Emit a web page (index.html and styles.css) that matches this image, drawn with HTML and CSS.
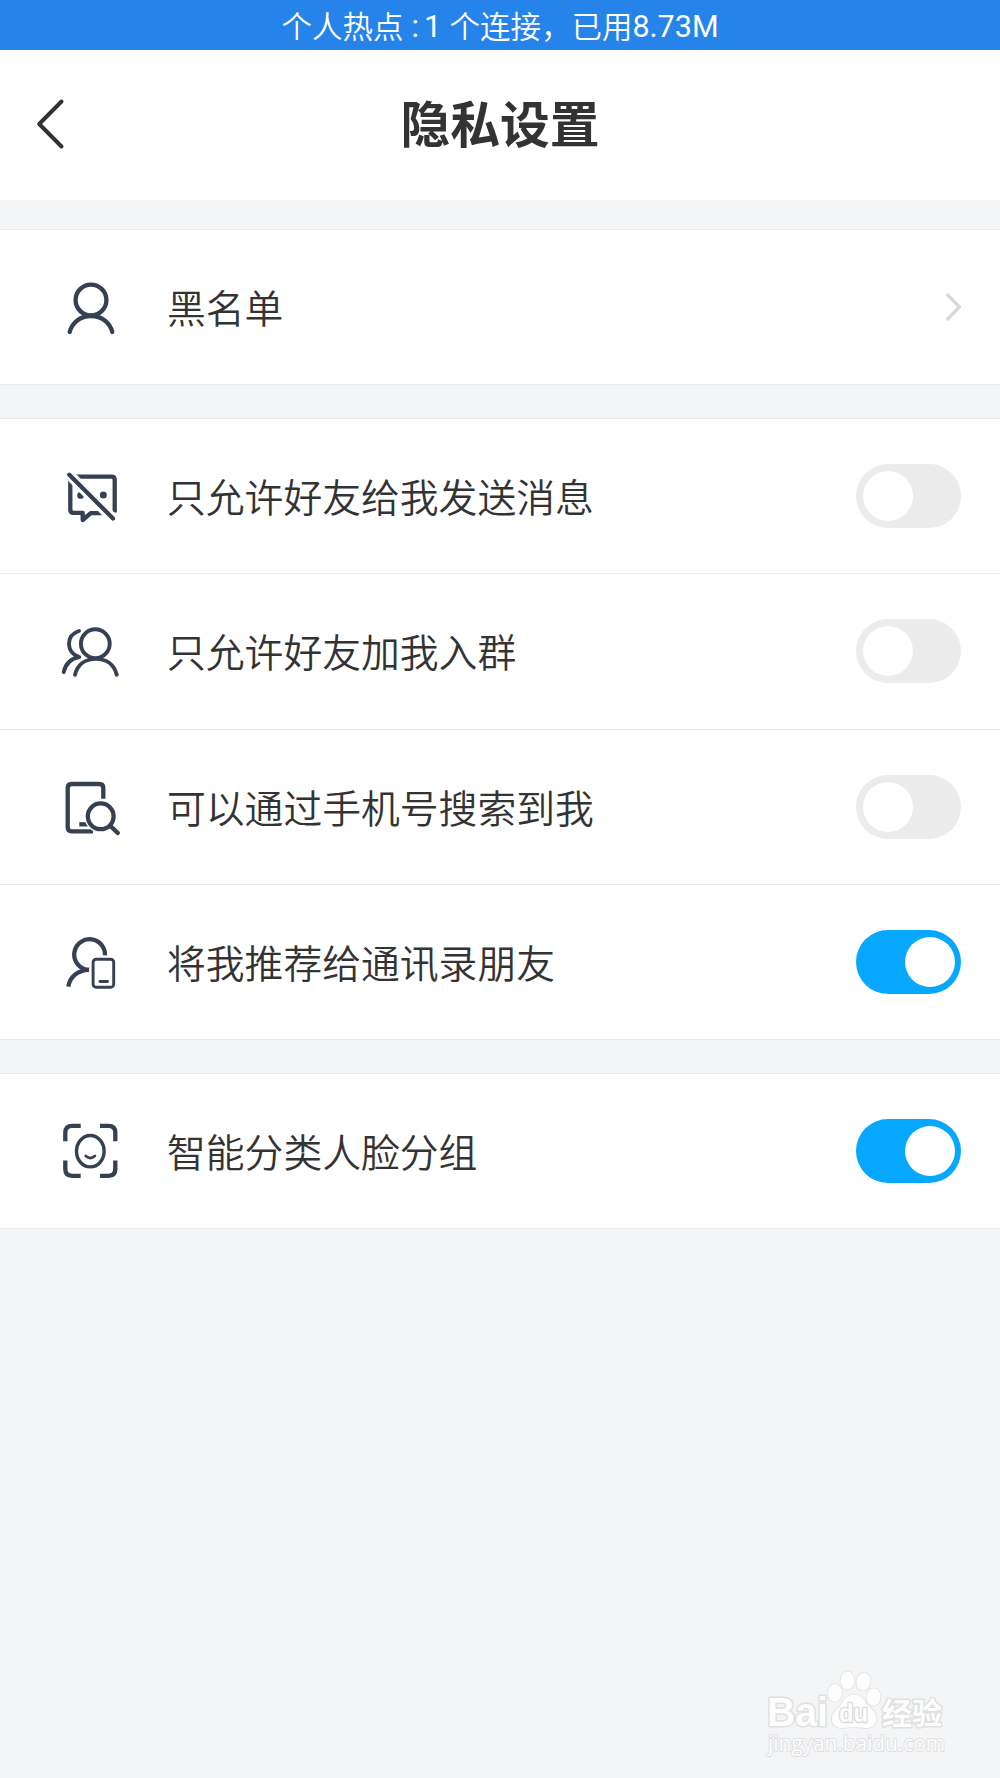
FILE: index.html
```html
<!DOCTYPE html>
<html lang="zh-CN">
<head>
    <meta charset="UTF-8">
    <meta name="viewport" content="width=device-width, initial-scale=1.0">
    <title>隐私设置</title>
    <link rel="stylesheet" href="styles.css">
</head>
<body>
    <div class="status-bar"><span class="status-hotspot">个人热点</span><span class="status-colon">:</span><span class="status-count">1</span><span class="status-link">个连接，</span><span class="status-used">已用</span><span class="status-size">8.73M</span></div>

    <header class="header">
        <svg class="back" viewBox="0 0 30 52">
            <path d="M26.5 3.5 L4.2 26 L26.5 48.5"/>
        </svg>
        <h1>隐私设置</h1>
    </header>

    <main>
        <section class="group">
            <div class="row">
                <svg class="icon" viewBox="0 0 60 60">
                    <circle cx="31" cy="23" r="15.4"/>
                    <path d="M9.7 55 C12 45.5 20.3 39 31 39 S50 45.5 52.3 55"/>
                </svg>
                <span class="label">黑名单</span>
                <svg class="arrow" viewBox="0 0 16 28">
                    <path d="M2.7 2 L14.4 13.9 L2.7 26"/>
                </svg>
            </div>
        </section>

        <section class="group">
            <div class="row">
                <svg class="icon" viewBox="0 0 60 60">
                    <path class="butt" d="M14 10.7 H51.5 Q54.7 10.7 54.7 14 V46.5 M10.3 14 V43.5 Q10.3 46.9 13.7 46.9 H22.7 V54 L30.7 47.1 H44"/>
                    <circle class="dot" cx="20.6" cy="29.4" r="3.4"/>
                    <circle class="dot" cx="43.3" cy="29" r="3.5"/>
                    <path class="gap" d="M8 7.4 L56 55.7"/>
                    <path d="M9.3 8.7 L53 52.5"/>
                </svg>
                <span class="label">只允许好友给我发送消息</span>
                <span class="switch"></span>
            </div>
            <div class="row">
                <svg class="icon thin" viewBox="0 0 60 60">
                    <circle cx="35.3" cy="22.7" r="14.4"/>
                    <path d="M15 53.7 C17.5 44 25 37.9 35.8 37.9 S54.2 44 56.7 53.7"/>
                    <path d="M19 10 C12.5 12 9 17 9 23 C9 29 12.8 34 19.3 36 C11 37.5 5.5 43 3.7 51"/>
                </svg>
                <span class="label">只允许好友加我入群</span>
                <span class="switch"></span>
            </div>
            <div class="row">
                <svg class="icon" viewBox="0 0 60 60">
                    <path class="butt" d="M43.3 21.7 V11 Q43.3 7 39.3 7 H11.7 Q7.7 7 7.7 11 V50.3 Q7.7 54.3 11.7 54.3 H33"/>
                    <path class="butt" d="M19.3 47.3 H29"/>
                    <circle class="lens-gap" cx="40.7" cy="39.3" r="16.5"/>
                    <circle cx="40.7" cy="39.3" r="12.9"/>
                    <path d="M50.4 49 L57.7 55.9"/>
                </svg>
                <span class="label">可以通过手机号搜索到我</span>
                <span class="switch"></span>
            </div>
            <div class="row">
                <svg class="icon" viewBox="0 0 60 60">
                    <path class="butt" d="M45 23.4 A15.4 15.4 0 1 0 25 37.3 L29 37.8"/>
                    <path class="butt" d="M8.3 54.6 C10 45 17.5 38 29 37.8"/>
                    <rect class="device" x="33.1" y="27.2" width="20.6" height="28" rx="3"/>
                    <path class="device" d="M40 49.5 H47.5"/>
                </svg>
                <span class="label">将我推荐给通讯录朋友</span>
                <span class="switch on"></span>
            </div>
        </section>

        <section class="group">
            <div class="row">
                <svg class="icon" viewBox="0 0 60 60">
                    <path class="butt" d="M20.7 4.8 H12 Q5.3 4.8 5.3 11.5 V20.2 M40 4.8 H48.6 Q55.3 4.8 55.3 11.5 V20.2 M5.3 39.5 V48.1 Q5.3 54.8 12 54.8 H20.7 M55.3 39.5 V48.1 Q55.3 54.8 48.6 54.8 H40"/>
                    <ellipse class="face" cx="30.3" cy="30.2" rx="13.8" ry="15.7"/>
                    <path class="device" d="M25.8 35 Q30.3 38.8 34.8 35"/>
                </svg>
                <span class="label">智能分类人脸分组</span>
                <span class="switch on"></span>
            </div>
        </section>
    </main>

    <svg class="watermark" viewBox="0 0 240 128">
        <text class="wm-bold" x="27" y="76" font-size="40" textLength="61" lengthAdjust="spacingAndGlyphs">Bai</text>
        <g class="wm-paw">
            <ellipse cx="95" cy="43" rx="7" ry="9"/>
            <ellipse cx="107.5" cy="30.5" rx="7" ry="9.3"/>
            <ellipse cx="123.5" cy="31.5" rx="7" ry="9" transform="rotate(12 123.5 31.5)"/>
            <ellipse cx="133.5" cy="47" rx="7" ry="8.7"/>
            <path d="M114 44.5 C120 44.5 123 48 126 53 C129 58 136 61 136.5 68 C137 75 131 78.5 125 78 C118 77 110 77 103 78 C96 78.5 91 75 92 67 C93 61 99 59 102 53 C105 48 108 44.5 114 44.5 Z"/>
        </g>
        <text class="wm-du" x="99" y="72" font-size="25" textLength="29" lengthAdjust="spacingAndGlyphs">du</text>
        <text class="wm-cjk" x="142" y="74" font-size="30">经验</text>
        <text class="wm-url" x="28" y="101" font-size="21" textLength="177" lengthAdjust="spacingAndGlyphs">jingyan.baidu.com</text>
    </svg>
</body>
</html>
```
FILE: styles.css
```css
* {
    box-sizing: border-box;
}
body {
    margin: 0;
    min-height: 1778px;
    background-color: #f4f5f7;
    color: #333;
    font-family: "Noto Sans CJK SC", sans-serif;
    position: relative;
}
.status-bar {
    height: 50px;
    display: flex;
    justify-content: center;
    background-color: #2683e9;
    color: #fff;
    font-size: 30.5px;
    font-weight: 350;
    line-height: 51px;
    white-space: pre;
}
.status-colon,
.status-count,
.status-size {
    font-family: Roboto, sans-serif;
    font-size: 31px;
    font-weight: 400;
    line-height: 54px;
}
.status-colon {
    margin-left: 8px;
}
.status-count {
    margin: 0 8px 0 5px;
}
.status-size {
    font-size: 30.5px;
}
.header {
    height: 150px;
    display: grid;
    grid-template-columns: 100px 1fr 100px;
    align-items: center;
    background-color: #fff;
}
.back {
    width: 30px;
    height: 52px;
    margin: 0 0 2px 35px;
    fill: none;
    stroke: #333;
    stroke-width: 4;
    stroke-linecap: round;
    stroke-linejoin: round;
}
h1 {
    margin: 0 0 9px;
    text-align: center;
    font-size: 49.8px;
    font-weight: 700;
    line-height: 72px;
}
main {
    display: flex;
    flex-direction: column;
    gap: 32.7px;
    padding-top: 29px;
}
.group {
    background-color: #fff;
    border-top: 1px solid #e8e9ea;
}
.row {
    height: 155.3px;
    display: flex;
    align-items: center;
    padding: 0 39.5px 0 60px;
    border-bottom: 1px solid #e8e9ea;
}
.icon {
    width: 60px;
    height: 60px;
    fill: none;
    stroke: #354052;
    stroke-width: 4.3;
    stroke-linecap: round;
    stroke-linejoin: round;
}
.icon.thin {
    stroke-width: 3.9;
}
.icon .butt {
    stroke-linecap: butt;
}
.icon .dot {
    fill: #354052;
    stroke: none;
}
.icon .gap {
    stroke: #fff;
    stroke-width: 10.5;
    stroke-linecap: butt;
}
.icon .lens-gap {
    fill: #fff;
    stroke: none;
}
.icon .device {
    stroke-width: 2.9;
}
.icon .face {
    stroke-width: 3.4;
}
.label {
    flex: 1;
    margin: 0 0 2px 47px;
    font-size: 38.8px;
    font-weight: 350;
    line-height: 56px;
}
.arrow {
    width: 16px;
    height: 28px;
    fill: none;
    stroke: #d8d8d8;
    stroke-width: 3.4;
    stroke-linecap: round;
    stroke-linejoin: round;
}
.switch {
    width: 105px;
    height: 64px;
    padding: 7px 6px 7px 7.5px;
    display: flex;
    border-radius: 32px;
    background-color: #ececec;
}
.switch::before {
    content: "";
    width: 50px;
    height: 50px;
    border-radius: 50%;
    background-color: #fff;
}
.switch.on {
    justify-content: flex-end;
    background-color: #07a7ff;
}
.watermark {
    position: absolute;
    right: 20px;
    bottom: 0;
    width: 240px;
    height: 128px;
    fill: #fdfdfd;
    stroke: #dfe0e1;
    stroke-width: 1.6;
    stroke-linejoin: round;
    paint-order: stroke;
}
.wm-bold,
.wm-du {
    font-family: "Liberation Sans", sans-serif;
    font-weight: bold;
}
.wm-bold {
    stroke-width: 3;
}
.wm-du {
    fill: #fdfdfd;
    stroke: #d9dadb;
    stroke-width: 2.6;
}
.wm-cjk {
    font-family: "Noto Sans CJK SC", sans-serif;
    font-weight: bold;
    stroke-width: 3;
}
.wm-url {
    font-family: "Open Sans", sans-serif;
    stroke-width: 2;
}
```
